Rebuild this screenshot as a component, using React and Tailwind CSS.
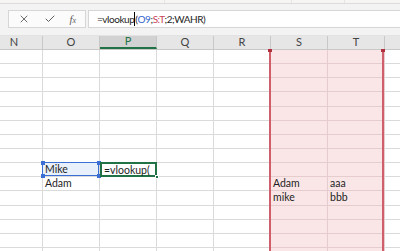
import { X, Check } from 'lucide-react';

const cols = ['N', 'O', 'P', 'Q', 'R', 'S', 'T', 'U'];
const ROWS = 15;

function Cell({ col, row }) {
  const pink = col === 'S' || col === 'T';
  let text = '';
  if (row === 9 && col === 'S') text = 'Adam';
  if (row === 9 && col === 'T') text = 'aaa';
  if (row === 10 && col === 'S') text = 'mike';
  if (row === 10 && col === 'T') text = 'bbb';
  if (row === 9 && col === 'O') text = 'Adam';

  if (row === 8 && col === 'O') {
    return (
      <div className="relative w-[57px] shrink-0 border-r border-b border-[#dadada]">
        <div className="absolute left-[-1px] top-[-1px] right-0 bottom-0 border border-[#3b6fd4] bg-[#e8f0fb] pl-[2px] leading-[13px]">
          Mike
        </div>
        <span className="absolute left-[-2px] top-[-2px] w-[4px] h-[4px] bg-[#3b6fd4]" />
        <span className="absolute right-[-2px] top-[-2px] w-[4px] h-[4px] bg-[#3b6fd4]" />
        <span className="absolute left-[-2px] bottom-[-2px] w-[4px] h-[4px] bg-[#3b6fd4]" />
        <span className="absolute right-[-2px] bottom-[-2px] w-[4px] h-[4px] bg-[#3b6fd4]" />
      </div>
    );
  }
  if (row === 8 && col === 'P') {
    return (
      <div className="relative w-[57px] shrink-0 border-r border-b border-[#dadada]">
        <div className="absolute left-[0px] top-[-1px] right-[-1px] bottom-[-1px] border-2 border-[#217346] bg-white pl-[2px] leading-[12px]">
          =vlookup(
        </div>
        <span className="absolute right-[-3px] bottom-[-3px] w-[4px] h-[4px] bg-[#217346] border border-white" />
      </div>
    );
  }
  return (
    <div
      className={
        'w-[57px] shrink-0 border-r border-b pl-[2px] leading-[13px] whitespace-nowrap overflow-hidden ' +
        (pink ? 'bg-[#fae6e6] border-[#e6cdcd]' : 'border-[#dadada]')
      }
    >
      {text}
    </div>
  );
}

export default function App() {
  return (
    <div className="w-[400px] h-[251px] overflow-hidden bg-[#f3f3f3] text-[10.5px] text-[#1e1e1e] font-['Lato','Liberation_Sans',sans-serif]">
      {/* ribbon bottom edge */}
      <div className="h-[4px] flex bg-[#f6f5f4] border-b border-[#dcdcdc]">
        <div className="w-[165px] border-r border-[#e4e4e4]" />
        <div className="w-[127px] border-r border-[#e4e4e4]" />
        <div className="w-[53px] border-r border-[#e4e4e4]" />
        <div className="flex-1" />
      </div>

      {/* formula bar */}
      <div className="h-[32px] flex items-start pt-[6px] pl-[8px] gap-[2px] border-b border-[#e2e2e2]">
        <div className="w-[78px] h-[18px] bg-[#fbfbfb] border border-[#d6d6d6] flex items-center justify-between px-[9px] text-[#5e5e5e]">
          <X size={12} strokeWidth={1.8} />
          <Check size={12} strokeWidth={2} />
          <span className="font-['Liberation_Serif',serif] italic text-[11px]">f<span className="text-[8px]">x</span></span>
        </div>
        <div className="flex-1 h-[18px] bg-white border-y border-l border-[#d6d6d6] flex items-center pl-[8px] text-[10px] tracking-[-0.45px] whitespace-nowrap">
          <span>=vlookup</span>
          <span className="inline-block w-[1px] h-[14px] bg-black" />
          <span>(</span>
          <span className="text-[#3266cc]">O9</span>
          <span>;</span>
          <span className="text-[#c94458]">S:T</span>
          <span>;2;WAHR)</span>
        </div>
      </div>

      {/* sheet */}
      <div className="relative">
        <div className="flex ml-[-14px] h-[14px] bg-[#e6e6e6] border-b border-[#c8c8c8] text-[#444] text-[11px]">
          {cols.map((c) => (
            <div
              key={c}
              className={
                'w-[57px] shrink-0 flex items-center justify-center border-r border-[#c8c8c8] ' +
                (c === 'P' ? 'bg-[#d2d2d2] text-[#217346] border-b-2 border-b-[#217346]' : '')
              }
            >
              {c === 'U' ? '' : c}
            </div>
          ))}
        </div>
        <div className="bg-white">
          {Array.from({ length: ROWS }).map((_, r) => (
            <div key={r} className="flex ml-[-14px] h-[14.15px]">
              {cols.map((c) => (
                <Cell key={c} col={c} row={r} />
              ))}
            </div>
          ))}
        </div>

        {/* S:T range reference */}
        <div className="absolute left-[269px] top-[14px] w-[115px] h-[240px] border-x-2 border-[#cf5f6a]" />
        <span className="absolute left-[268px] top-[13px] w-[4px] h-[3px] bg-[#b0303d]" />
        <span className="absolute left-[381px] top-[13px] w-[4px] h-[3px] bg-[#b0303d]" />
      </div>
    </div>
  );
}
